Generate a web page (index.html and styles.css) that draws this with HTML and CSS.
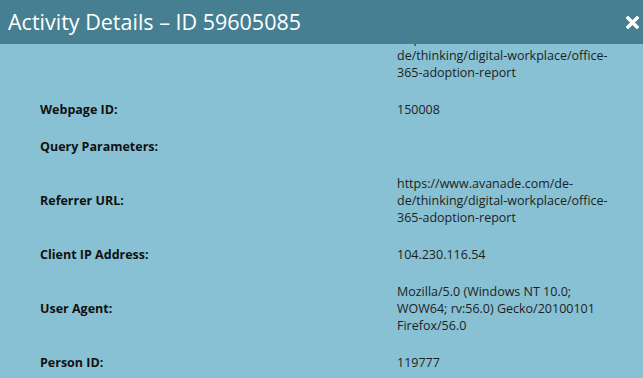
FILE: index.html
```html
<!DOCTYPE html>
<html lang="en">
<head>
  <meta charset="UTF-8">
  <title>Activity Details</title>
  <link rel="stylesheet" href="styles.css">
</head>
<body>
  <div class="dialog">
    <div class="dialog-header">
      <h1>Activity Details – ID 59605085</h1>
      <span class="close">
        <svg width="13" height="13" viewBox="0 0 13 13">
          <path d="M2 2 L11 11 M11 2 L2 11" stroke="#fff" stroke-width="3.4" stroke-linecap="square" />
        </svg>
      </span>
    </div>
    <div class="dialog-body">
      <div class="details">
        <div class="row">
          <div class="label"></div>
          <div class="value">https://www.avanade.com/de-de/thinking/digital-workplace/office-365-adoption-report</div>
        </div>
        <div class="row">
          <div class="label">Webpage ID:</div>
          <div class="value">150008</div>
        </div>
        <div class="row">
          <div class="label">Query Parameters:</div>
          <div class="value"></div>
        </div>
        <div class="row">
          <div class="label">Referrer URL:</div>
          <div class="value">https://www.avanade.com/de-de/thinking/digital-workplace/office-365-adoption-report</div>
        </div>
        <div class="row">
          <div class="label">Client IP Address:</div>
          <div class="value">104.230.116.54</div>
        </div>
        <div class="row">
          <div class="label">User Agent:</div>
          <div class="value">Mozilla/5.0 (Windows NT 10.0; WOW64; rv:56.0) Gecko/20100101 Firefox/56.0</div>
        </div>
        <div class="row">
          <div class="label">Person ID:</div>
          <div class="value">119777</div>
        </div>
      </div>
    </div>
  </div>
</body>
</html>
```

FILE: styles.css
```css
* {
  font-family: "Open Sans", sans-serif;
  box-sizing: border-box;
}
body {
  margin: 0;
  background-color: #88c1d3;
}

.dialog {
  display: flex;
  flex-direction: column;
  height: 100vh;
  overflow: hidden;
}

.dialog-header {
  display: flex;
  align-items: center;
  justify-content: space-between;
  height: 44px;
  padding: 0 4px 0 8px;
  background-color: #467f92;
  color: #fff;
}

.dialog-header h1 {
  margin: 0;
  font-size: 21.5px;
  font-weight: 400;
  line-height: 1;
}

.close {
  display: flex;
  cursor: pointer;
}

.dialog-body {
  flex: 1;
  overflow: hidden;
}

/* content is scrolled a little, first row sits under the header */
.details {
  margin-top: -24px;
  padding-left: 40px;
}

.row {
  display: grid;
  grid-template-columns: 357px 216px;
  align-items: center;
  padding: 10px 0;
  font-size: 12.5px;
  line-height: 17px;
}

.label {
  font-weight: 700;
  color: #111;
}

.value {
  color: #1e1e1e;
  overflow-wrap: break-word;
}
```
